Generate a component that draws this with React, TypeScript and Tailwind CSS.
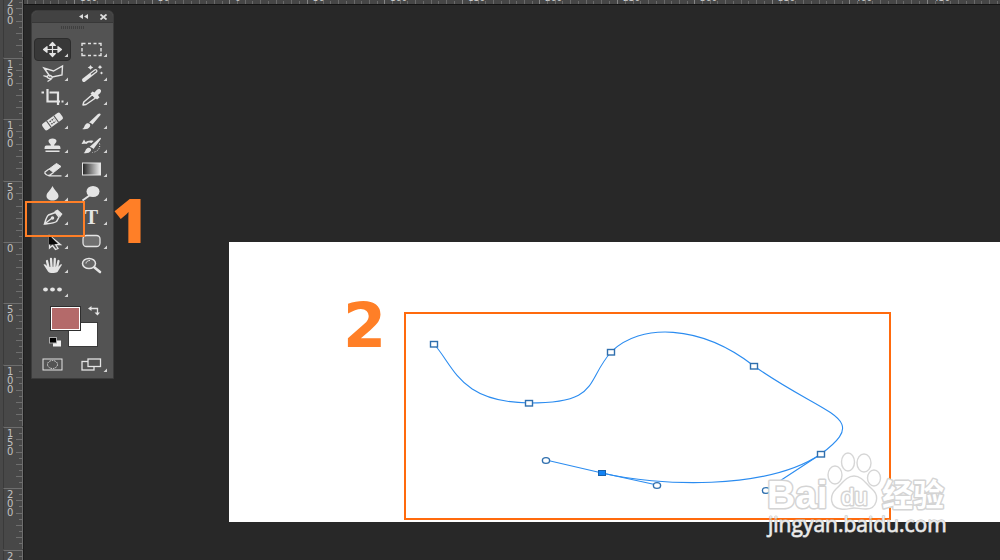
import { useState } from "react";
import type { ReactNode } from "react";

type Tool = {
  name: string;
  icon: ReactNode;
  single?: boolean;
};

const LIGHT = "#e4e4e4";

const tools: Tool[] = [
  {
    name: "Move",
    icon: (
      <path
        d="M-6 0H6M0-4.500V4.500M-9 0l3.500-2.800v5.600ZM9 0l-3.500-2.800v5.600ZM0-7l2.800 3h-5.600ZM0 7l2.800-3h-5.600Z"
        fill={LIGHT}
        stroke={LIGHT}
        strokeWidth="1.2"
        strokeLinejoin="round"
      />
    ),
  },
  {
    name: "Marquee",
    icon: (
      <path
        d="M-9.500-3.500V-6H-6M-3.500-6H-.5M2-6H5M7-6H9.500V-3.500M9.500-1.500V2M9.500 3.500V6H7M5 6H2M-.5 6H-3.500M-6 6H-9.500V3.500M-9.500 2V-1.500"
        fill="none"
        stroke={LIGHT}
        strokeWidth="1.4"
      />
    ),
  },
  {
    name: "Lasso",
    icon: (
      <path
        d="M-2.500 3L-8.500-5.500L1-2.500L10-7.500L9.500 1.500L0 3.500C-3 0.500-6 2-5 4C-3.500 5.500 0 5.500 0 3.500M-5 3.500C-6.500 3-8 2-9 2.500M-1 5.500L-5 8"
        fill="none"
        stroke={LIGHT}
        strokeWidth="1.4"
      />
    ),
  },
  {
    name: "Magic wand",
    icon: (
      <>
        <path d="M-7.500 6.500L4-2.500" stroke={LIGHT} strokeWidth="4" strokeLinecap="round" />
        <path d="M0 0.500L4-2.500" stroke="#535353" strokeWidth="1.4" strokeLinecap="round" />
        <path
          d="M-1-8.500l1 1.500l1.800 1l-1.800 1l-1 1.300l-1-1.300l-1.800-1l1.800-1ZM8.500-8.500l.8 1.300l1.500.9l-1.500.9l-.8 1.100l-.8-1.100l-1.500-.9l1.500-.9ZM10-2l.7.9l1.100.6l-1.100.6l-.7.9l-.7-.9l-1.100-.6l1.100-.6Z"
          fill={LIGHT}
        />
      </>
    ),
  },
  {
    name: "Crop",
    icon: (
      <path
        d="M-11-5H-8.500M-5-8.500V4H7.500M-3-5H5.500V7.500M9 4H11"
        fill="none"
        stroke={LIGHT}
        strokeWidth="2.2"
      />
    ),
  },
  {
    name: "Eyedropper",
    icon: (
      <>
        <path
          d="M-8.500 7.500l.8-3L1-3L4 .5L-5.500 7Z"
          fill="none"
          stroke={LIGHT}
          strokeWidth="1.5"
          strokeLinejoin="round"
        />
        <path
          d="M-1-4L1-6L3-5C4-6.500 6-8.800 8-8.500C10.500-7.500 10-5 6.500-2.500L8 0L5.500 2Z"
          fill={LIGHT}
        />
      </>
    ),
  },
  {
    name: "Healing brush",
    icon: (
      <g transform="rotate(-36)">
        <rect x="-11" y="-4" width="22" height="8" rx="2" fill={LIGHT} />
        <path d="M-4.500-4V4M4.500-4V4" stroke="#535353" />
        <path d="M-2.500-1.500H3M-2.500 1.500H3" stroke="#535353" strokeWidth="1.400" strokeDasharray="1.500 1" />
      </g>
    ),
  },
  {
    name: "Brush",
    icon: (
      <path
        d="M-9.500 7.500C-7 7-7.500 3.500-5 2C-2.500 1-.5 3-1.500 5C-3 8-7 8-9.500 7.500ZM-2.500 1L6.500-7.500C8.500-8.800 9.800-7.500 8.800-6.200L1 3C0 2-1 1.200-2.500 1Z"
        fill={LIGHT}
      />
    ),
  },
  {
    name: "Clone stamp",
    icon: (
      <path
        d="M-1.500 0C-2-2-4-2.500-4-4.500C-4-6 -2.500-7 0-7S4-6 4-4.500C4-2.500 2-2 1.500 0H6C7.500 0 8 1 8 3.500H-8C-8 1-7.500 0-6 0ZM-7 5H7V6.500H-7Z"
        fill={LIGHT}
      />
    ),
  },
  {
    name: "History brush",
    icon: (
      <>
        <path
          d="M-8 7.500C-6 7-6.500 4-4 2.500C-2 1.500 0 3 -.5 5C-2 8-6 8-8 7.500ZM-2 1.500L7.500-7C9.500-8.500 10-7 9-6L2 3.500C1 2.500 0 1.500-2 1.500Z"
          fill={LIGHT}
        />
        <path d="M-10-1.500L-7.500-6L-5-2ZM-7-2.500C-4-5-1-5.500 2-4.500L0-2.500C-2-3.500-4-3-5-1.500Z" fill={LIGHT} />
        <path d="M8-2C9 2 7 6 1 7" fill="none" stroke={LIGHT} strokeDasharray="1 1.500" />
      </>
    ),
  },
  {
    name: "Eraser",
    icon: (
      <>
        <path d="M-3.500-.5L4-6L8.500-3L1 3Z" fill={LIGHT} stroke={LIGHT} strokeLinejoin="round" />
        <path
          d="M-3.500-.5L-7.500 2.500C-8.500 4-5 6.500-3 5.800L1 3M-4 6.300H9"
          fill="none"
          stroke={LIGHT}
          strokeWidth="1.3"
        />
      </>
    ),
  },
  {
    name: "Gradient",
    icon: (
      <>
        <defs>
          <linearGradient id="toolGradient">
            <stop offset="0" stopColor="#222" />
            <stop offset="1" stopColor="#eee" />
          </linearGradient>
        </defs>
        <rect x="-9" y="-6.500" width="18" height="12" fill="url(#toolGradient)" stroke={LIGHT} />
      </>
    ),
  },
  {
    name: "Blur",
    icon: <path d="M0-7.500C2-3 6-1 6 2.500C6 5 3.500 7 0 7S-6 5-6 2.500C-6-1-2-3 0-7.500Z" fill={LIGHT} />,
  },
  {
    name: "Dodge",
    icon: (
      <>
        <ellipse cx="1.500" cy="-2" rx="6.500" ry="5.500" fill={LIGHT} />
        <path d="M-2 2L-9 7" stroke={LIGHT} strokeWidth="2" />
      </>
    ),
  },
  {
    name: "Pen",
    icon: (
      <g fill="none" stroke={LIGHT} strokeWidth="1.5">
        <path d="M-8 6.500C-7 3-6-1-4-2.500L3-5L6.500-.5L4 4C1 6-4 6-8 6.500ZL-1 1" />
        <path d="M3-6L5-7L9-3.500L7.500-1.500Z" fill={LIGHT} />
        <circle cx="0" cy="0.500" r="1" fill={LIGHT} />
      </g>
    ),
  },
  {
    name: "Type",
    icon: (
      <text
        x="0"
        y="6"
        textAnchor="middle"
        className="font-['Liberation_Serif',serif] text-[20px] font-bold"
        fill={LIGHT}
      >
        T
      </text>
    ),
  },
  {
    name: "Path selection",
    icon: (
      <>
        <path
          d="M-3-6V6.500L0 4L3 8L5.500 7L3 3H8Z"
          fill="#535353"
          stroke={LIGHT}
          strokeWidth="1.3"
        />
        <path d="M-3.500-7V3L5 2.500Z" fill="#0a0a0a" />
      </>
    ),
  },
  {
    name: "Rounded rectangle",
    icon: (
      <rect x="-8.500" y="-6" width="17" height="11" rx="3.500" fill="#707070" stroke={LIGHT} strokeWidth="1.300" />
    ),
  },
  {
    name: "Hand",
    icon: (
      <>
        <path d="M-9-1C-7-2-6 0-4.500 1.500L6 1L8-1C9-1.500 10-1 9 0L5 6.500C2 8-3 8-4.500 6Z" fill={LIGHT} />
        <path
          d="M-4 2L-5.500-4.500M-1 1L-1.500-6.500M2 1L2.300-6.500M4.500 2L6-4.500"
          stroke={LIGHT}
          strokeWidth="2.300"
          strokeLinecap="round"
        />
      </>
    ),
  },
  {
    name: "Zoom",
    single: true,
    icon: (
      <>
        <ellipse cx="-2.500" cy="-2" rx="6.500" ry="5" fill="#666" stroke={LIGHT} strokeWidth="1.500" />
        <path d="M3 2L8.500 6.500" stroke={LIGHT} strokeWidth="2.600" strokeLinecap="round" />
        <path d="M-5.500-2C-5.500-4-3.500-5-1.500-5" stroke={LIGHT} fill="none" />
      </>
    ),
  },
  {
    name: "More tools",
    icon: (
      <g fill={LIGHT}>
        <ellipse cx="-7" cy="0" rx="2.400" ry="2" />
        <ellipse cx="0" cy="0" rx="2.400" ry="2" />
        <ellipse cx="7" cy="0" rx="2.400" ry="2" />
      </g>
    ),
  },
];

const modes: Tool[] = [
  {
    name: "Quick mask",
    single: true,
    icon: (
      <g fill="none" stroke={LIGHT}>
        <rect x="-9.500" y="-5.500" width="19" height="11" />
        <ellipse rx="5" ry="4" strokeDasharray="1.500 1" />
      </g>
    ),
  },
  {
    name: "Screen mode",
    icon: (
      <g fill="#535353" stroke={LIGHT} strokeWidth="1.300">
        <rect x="-9.500" y="-3" width="12" height="8.500" />
        <rect x="-3.500" y="-5.500" width="12.500" height="7.500" />
      </g>
    ),
  },
];

const leftMarks = [
  { label: "200", size: "h-[57px]" },
  { label: "150", size: "h-[62px]" },
  { label: "100", size: "h-[61px]" },
  { label: "50", size: "h-[62px]" },
  { label: "0", size: "h-[61px]" },
  { label: "50", size: "h-[61px]" },
  { label: "100", size: "h-[62px]" },
  { label: "150", size: "h-[62px]" },
  { label: "200", size: "h-[61px]" },
  { label: "2", size: "h-[62px]" },
];

const topMarks = ["150", "100", "50", "0", "50", "100", "150", "200", "250", "300", "350", "400", "450"];

const steps = [1, 2, 3, 4, 5, 6, 7, 8, 9];

function LeftRuler() {
  return (
    <div className="flex w-6 shrink-0 flex-col overflow-hidden border-r border-[#1d1d1d] bg-[#484848]">
      {leftMarks.map((mark, i) => (
        <div key={i} className={`flex shrink-0 flex-col justify-end overflow-hidden ${mark.size}`}>
          <div className="ml-[3px] flex h-[61px] shrink-0 justify-between border-t border-r border-l border-t-[#6e6e6e] border-r-[#6e6e6e] border-l-[#3a3a3a]">
            <div className="ml-[3px] w-2 pt-px font-['DejaVu_Sans',sans-serif] text-[10px] leading-[9px] text-[#c0c0c0]">
              {mark.label.split("").map((digit, n) => (
                <div key={n}>{digit}</div>
              ))}
            </div>
            <svg className="h-[61px] w-[6px]" viewBox="0 0 6 61">
              {steps.map((s) => (
                <path key={s} d={`M${s % 2 ? 3 : 0} ${Math.round(s * 6.14) - 0.5}H6`} stroke="#6e6e6e" />
              ))}
            </svg>
          </div>
        </div>
      ))}
    </div>
  );
}

function TopRuler() {
  return (
    <div className="flex h-[5px] shrink-0 overflow-hidden border-b border-[#141414] bg-[#464646]">
      {topMarks.map((label, i) => (
        <div
          key={i}
          className={`flex h-1 shrink-0 flex-col justify-end overflow-hidden ${
            i === 0 ? "w-[50px] items-end" : i % 2 ? "w-[78px]" : "w-[77px]"
          }`}
        >
          <div className="relative h-4 w-[78px] shrink-0 border-l border-[#858585]">
            <svg className="absolute inset-0 h-4 w-[78px]" viewBox="0 0 78 16">
              {steps.map((s) => (
                <path key={s} d={`M${Math.round(s * 7.75) - 0.5} ${s % 2 ? 13 : 12}V16`} stroke="#6a6a6a" />
              ))}
            </svg>
            <span className="relative block pt-[5px] pl-[5px] font-['DejaVu_Sans',sans-serif] text-[9px] leading-[10px] text-[#d0d0d0]">
              {label}
            </span>
          </div>
        </div>
      ))}
    </div>
  );
}

function ToolButton({ tool, active, onPick }: { tool: Tool; active: boolean; onPick: () => void }) {
  return (
    <div className="flex h-6 items-center justify-center">
      <button
        type="button"
        aria-label={tool.name}
        onClick={onPick}
        className={`h-[23px] w-[37px] rounded-sm border ${
          active ? "border-[#2c2c2c] bg-[#383838]" : "border-transparent"
        }`}
      >
        <svg className="block h-[21px] w-[35px] overflow-visible" viewBox="-17.5 -10.5 35 21">
          {tool.icon}
          {!tool.single && <path d="M15.500 4V7.500H12Z" fill="#d4d4d4" />}
        </svg>
      </button>
    </div>
  );
}

function Toolbox() {
  const [active, setActive] = useState("Move");

  return (
    <aside className="absolute top-[5px] left-[7px] w-[83px] rounded-t-md border border-[#3b3b3b] bg-[#535353] pb-0.5">
      <div className="flex h-3 items-center justify-end gap-3 rounded-t-md border-b border-[#383838] bg-[#424242] pr-1.5">
        <button type="button" aria-label="Collapse">
          <svg className="block h-[5px] w-[9px]" viewBox="0 0 9 5">
            <path d="M4 0V5L0 2.500ZM9 0V5L5 2.500Z" fill="#ddd" />
          </svg>
        </button>
        <button type="button" aria-label="Close">
          <svg className="block h-[6px] w-[7px]" viewBox="0 0 7 6">
            <path d="M.5.5L6.500 5.500M6.500.5L.5 5.500" stroke="#ddd" strokeWidth="1.800" />
          </svg>
        </button>
      </div>
      <div className="flex h-[14px] justify-center pt-[3px]">
        <svg className="h-[3px] w-6" viewBox="0 0 24 3">
          <path d="M0 1.500H24" stroke="#3f3f3f" strokeWidth="3" strokeDasharray="1 1" />
        </svg>
      </div>
      <div className="mr-0.5 ml-px grid grid-cols-2">
        {tools.map((tool) => (
          <ToolButton
            key={tool.name}
            tool={tool}
            active={active === tool.name}
            onPick={() => setActive(tool.name)}
          />
        ))}
      </div>
      <div className="relative h-[51px]">
        <button
          type="button"
          aria-label="Background color"
          className="absolute top-[21px] left-9 h-[25px] w-[30px] border border-[#3a3a3a] bg-white"
        />
        <button
          type="button"
          aria-label="Foreground color"
          className="absolute top-[5px] left-[18px] h-[25px] w-[31px] border border-[#2e2e2e] bg-white p-px"
        >
          <span className="block h-full w-full bg-[#b46a6a]" />
        </button>
        <button type="button" aria-label="Swap colors" className="absolute top-[5px] left-14">
          <svg className="block h-[10px] w-3" viewBox="0 0 12 10">
            <path d="M2 2.500H9.500V8" fill="none" stroke={LIGHT} strokeWidth="1.300" />
            <path d="M0 2.500L3.500 0V5ZM6.500 6.500H12L9.500 9.500Z" fill={LIGHT} />
          </svg>
        </button>
        <button type="button" aria-label="Default colors" className="absolute top-[36px] left-[17px]">
          <svg className="block h-[10px] w-3" viewBox="0 0 12 10">
            <rect x="4" y="3.500" width="8" height="6" fill="#f0f0f0" />
            <rect x=".5" y=".5" width="7" height="5.500" fill="#000" stroke="#aaa" />
          </svg>
        </button>
      </div>
      <div className="mr-0.5 ml-px grid grid-cols-2">
        {modes.map((tool) => (
          <ToolButton
            key={tool.name}
            tool={tool}
            active={active === tool.name}
            onPick={() => setActive(tool.name)}
          />
        ))}
      </div>
    </aside>
  );
}

// anchor points and handles are in canvas coordinates
const anchors = [
  [205, 102],
  [300, 161],
  [382, 110],
  [525, 124],
  [592, 212],
];

const handles = [
  [317, 218],
  [428, 243],
  [537, 248],
];

function PenPath() {
  return (
    <svg className="absolute top-0 left-0 h-[280px] w-[771px]" viewBox="0 0 771 280">
      <g fill="none" stroke="#2b8cf0" strokeWidth="1.1">
        <path d="M205 102C226 126 231 160 300 161C371 161 356 140 382 110C411 81 471 82 525 124C597 175 643 174 592 212C537 249 428 244 373 231" />
        <path d="M317 218L373 231L428 243M592 212L537 248" />
      </g>
      {anchors.map(([x, y]) => (
        <rect key={x} x={x - 3.5} y={y - 2.5} width="7" height="5.5" fill="#fff" stroke="#2f6fae" strokeWidth="1.4" />
      ))}
      <rect x="369.5" y="228.5" width="7" height="5" fill="#1283f5" stroke="#1b62ab" />
      {handles.map(([x, y]) => (
        <ellipse key={x} cx={x} cy={y + 0.5} rx="3.6" ry="2.9" fill="#fff" stroke="#2f6fae" strokeWidth="1.4" />
      ))}
    </svg>
  );
}

function Watermark() {
  return (
    <svg className="absolute top-[205px] left-[530px] h-[100px] w-[200px]" viewBox="0 0 200 100">
      <g fill="#fff" fillOpacity=".75" stroke="#d6d6d6" strokeWidth="1.4">
        <ellipse cx="76" cy="28" rx="7" ry="9" />
        <ellipse cx="89" cy="15" rx="6.500" ry="9" />
        <ellipse cx="105" cy="16" rx="7" ry="9" />
        <ellipse cx="115" cy="31" rx="6.500" ry="8" />
        <path d="M95 29C103 29 107 37 113 42C121 49 118 62 107 62C101 62 99 61 95 61S88 63 82 62C71 61 70 49 77 42C83 37 87 29 95 29Z" />
      </g>
      <g fill="#fff" stroke="#d4d4d4" strokeWidth="3" paintOrder="stroke" strokeLinejoin="round">
        <text x="8" y="61" className="font-['Liberation_Sans',sans-serif] text-[39px] font-bold">Bai</text>
        <text x="82" y="58" className="font-['Liberation_Sans',sans-serif] text-[24px]">du</text>
        <text x="123" y="59" className="font-['Noto_Sans_CJK_SC',sans-serif] text-[31px] font-bold">经验</text>
      </g>
      <text
        x="9"
        y="85"
        className="font-['Open_Sans',sans-serif] text-[21px]"
        fill="#ebebeb"
        stroke="#bdbdbd"
        strokeWidth="1"
        paintOrder="stroke"
      >
        jingyan.baidu.com
      </text>
    </svg>
  );
}

export default function App() {
  return (
    <div className="flex h-screen overflow-hidden bg-[#282828]">
      <LeftRuler />
      <div className="flex min-w-0 flex-1 flex-col">
        <TopRuler />
        <main className="relative flex-1 pt-[237px] pl-[205px]">
          <div className="relative h-[280px] bg-white">
            <PenPath />
            <div className="absolute top-[70px] left-[175px] h-[208px] w-[487px] border-2 border-[#ff6a0d]" />
            <div className="absolute top-[53px] left-[114px] font-['DejaVu_Sans',sans-serif] text-[62px] leading-[62px] font-bold text-[#ff7f27]">
              2
            </div>
            <Watermark />
          </div>
          <Toolbox />
          <div className="absolute top-[196px] left-px h-9 w-[60px] border-2 border-[#ff7f27]" />
          <div className="absolute top-[183px] left-[88px] font-['Open_Sans',sans-serif] text-[62px] leading-[62px] font-extrabold text-[#ff7f27]">
            1
          </div>
        </main>
      </div>
    </div>
  );
}
